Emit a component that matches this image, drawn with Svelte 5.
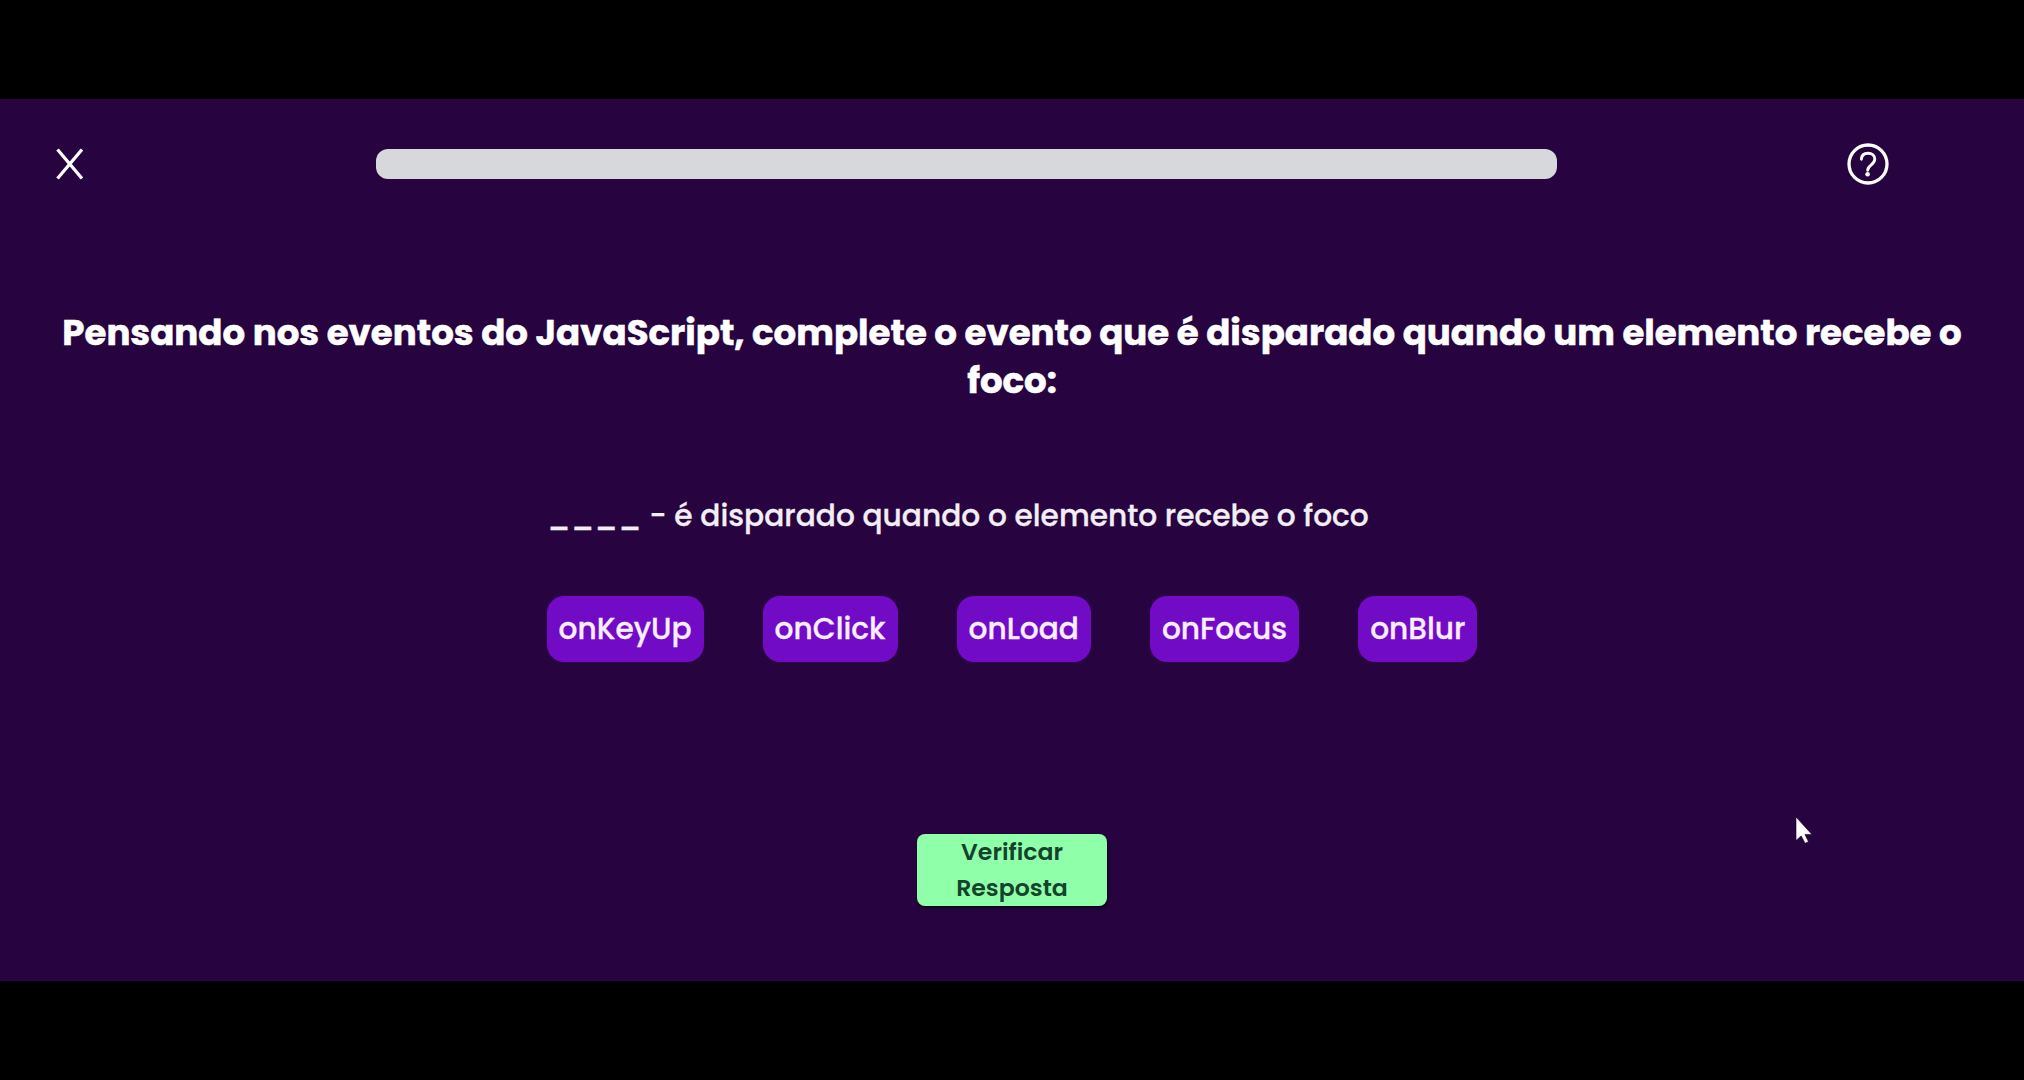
<script>
  const options = ['onKeyUp', 'onClick', 'onLoad', 'onFocus', 'onBlur'];
</script>

<main>
  <section class="quiz">
    <header>
      <svg class="close" viewBox="0 0 28 32"><path d="M1.5 1.5 26 30.5M26 1.5 1.5 30.5" /></svg>
      <div class="progress"></div>
      <svg class="help" viewBox="0 0 42 42">
        <circle cx="21" cy="21" r="19" />
        <path d="M14.4 16.2C14.6 12.4 17.3 10.3 21 10.3c4 0 6.8 2.3 6.8 5.8 0 2.8-1.6 4.3-3.8 6-2.3 1.8-3.3 2.6-3.3 5.2" />
        <circle class="dot" cx="20.6" cy="31.3" r="2.3" />
      </svg>
    </header>

    <h1>Pensando nos eventos do JavaScript, complete o evento que é disparado quando um elemento recebe o<br />foco:</h1>

    <p class="sentence">____ - é disparado quando o elemento recebe o foco</p>

    <div class="options">
      {#each options as label}
        <button>{label}</button>
      {/each}
    </div>

    <button class="verify">Verificar<br />Resposta</button>
  </section>

  <svg class="cursor" viewBox="0 0 18 28">
    <path d="M1 1v23.5l5.2-4.6 3.9 7.4 3.4-1.6-3.6-7.3h7z" />
  </svg>
</main>

<style>
  :global(body) { background: #000; }
  main {
    position: relative;
    box-sizing: border-box;
    width: 2024px;
    height: 1080px;
    padding-top: 99px;
    overflow: hidden;
    background: #000;
    font-family: Poppins, Inter, "Liberation Sans", sans-serif;
    color: #fff;
  }
  .quiz {
    display: flex;
    flex-direction: column;
    box-sizing: border-box;
    height: 882px;
    background: #27043f;
  }
  header {
    display: flex;
    align-items: center;
    height: 129px;
    padding-left: 56px;
  }
  svg { flex: none; fill: none; stroke: #fff; stroke-width: 3.3; }
  .close { width: 28px; height: 32px; }
  .progress {
    width: 1181px;
    height: 30px;
    margin-left: 292px;
    border-radius: 12px;
    background: #d7d8dc;
  }
  .help { width: 42px; height: 42px; margin-left: 290px; stroke-linecap: round; }
  .help path { stroke-width: 2.9; }
  .help .dot { fill: #fff; stroke: none; }
  h1 {
    margin: 81px 0 0;
    font-size: 35.57px;
    font-weight: 700;
    line-height: 48px;
    text-align: center;
    white-space: nowrap;
    -webkit-text-stroke: 0.5px #fff;
  }
  .sentence {
    margin: 87px 0 0;
    padding-left: 547px;
    font-size: 29.65px;
    font-weight: 500;
    line-height: 48px;
    white-space: nowrap;
    color: #f3eef5;
    -webkit-text-stroke: 0.3px #f3eef5;
  }
  .options {
    display: flex;
    justify-content: center;
    gap: 59px;
    margin-top: 56px;
  }
  button {
    flex: none;
    height: 66px;
    padding: 0 12px;
    border: 0;
    border-radius: 17px;
    background: #710bc6;
    color: #fbefff;
    font: inherit;
    font-size: 29.65px;
    font-weight: 500;
    -webkit-text-stroke: 0.3px #fbefff;
  }
  .verify {
    align-self: center;
    width: 190px;
    height: 72px;
    margin-top: 172px;
    padding: 0 0 2px;
    border-radius: 8px;
    background: #8fffaa;
    box-shadow: 1px 2px 3px #0008;
    color: #14432c;
    font-size: 23.6px;
    font-weight: 600;
    line-height: 35.5px;
    -webkit-text-stroke: 0;
  }
  .cursor {
    position: absolute;
    left: 1795px;
    top: 816px;
    width: 18px;
    height: 28px;
  }
  .cursor path { fill: #fff; stroke: #120020; stroke-width: 0.6; }
</style>
